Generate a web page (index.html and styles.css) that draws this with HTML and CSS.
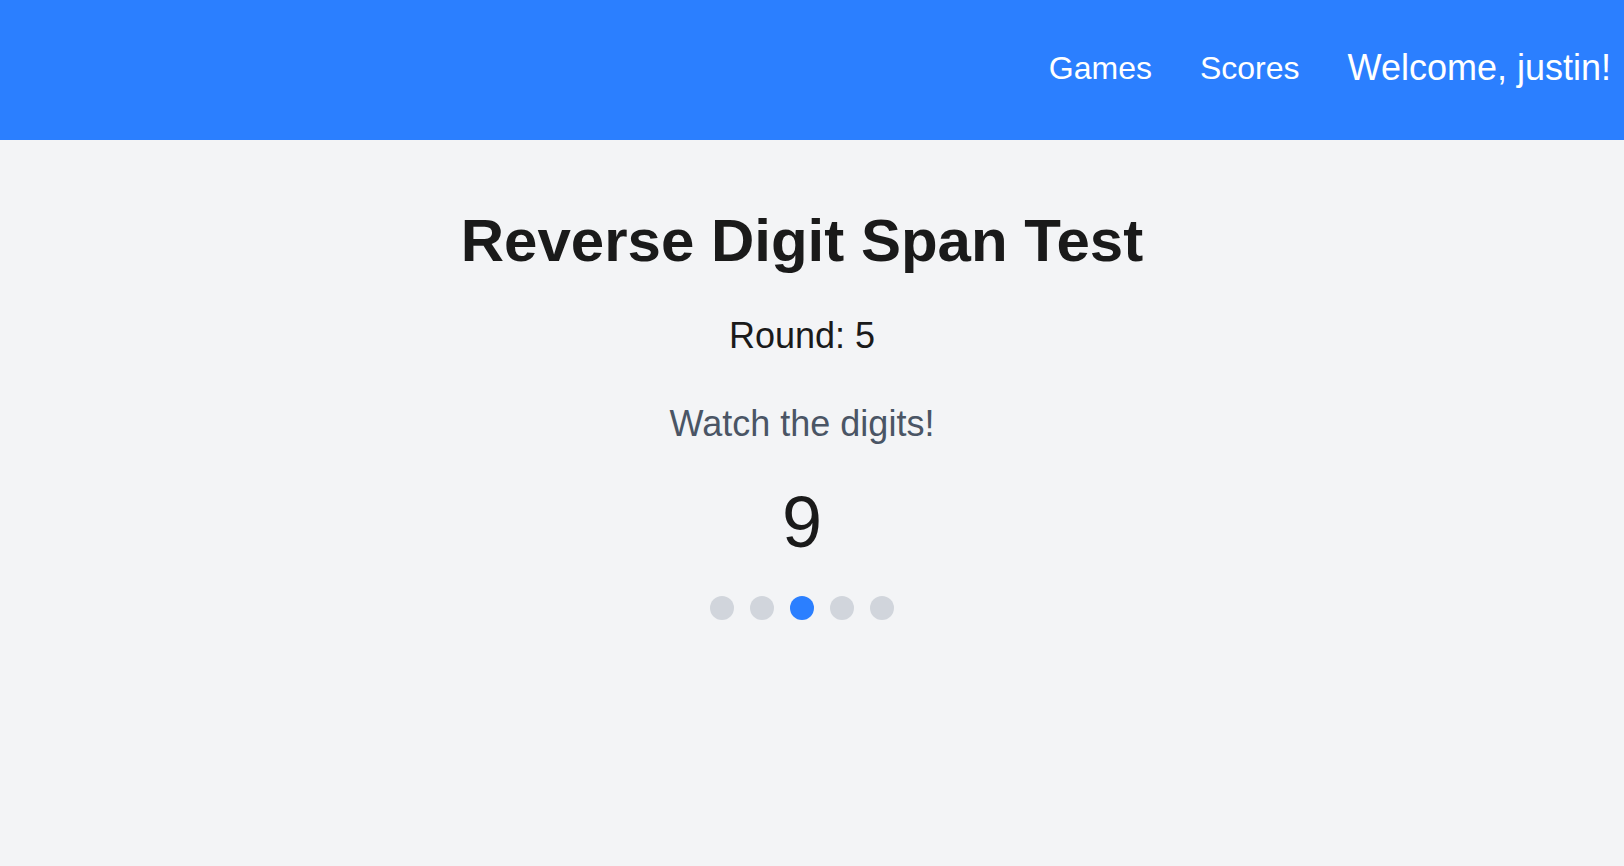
FILE: index.html
```html
<!DOCTYPE html>
<html lang="en">
<head>
<meta charset="utf-8">
<title>Reverse Digit Span Test</title>
<link rel="stylesheet" href="styles.css">
</head>
<body>
<header class="topbar">
  <nav class="nav">
    <a class="nav-link" href="#">Games</a>
    <a class="nav-link" href="#">Scores</a>
    <span class="welcome">Welcome, justin!</span>
  </nav>
</header>
<main class="game">
  <h1 class="title">Reverse Digit Span Test</h1>
  <p class="round">Round: 5</p>
  <p class="instruction">Watch the digits!</p>
  <div class="digit">9</div>
  <div class="dots">
    <span class="dot"></span>
    <span class="dot"></span>
    <span class="dot active"></span>
    <span class="dot"></span>
    <span class="dot"></span>
  </div>
</main>
</body>
</html>
```
FILE: styles.css
```css
html, body {
  margin: 0;
  padding: 0;
}
body {
  font-family: "Liberation Sans", Arial, sans-serif;
  background: #f3f4f6;
  color: #1a1a1a;
  min-height: 866px;
}
.topbar {
  height: 140px;
  background: #2b7fff;
  display: flex;
  justify-content: flex-end;
  align-items: center;
  padding: 0 13px 4px 16px;
  box-sizing: border-box;
}
.nav {
  display: flex;
  align-items: center;
  gap: 48px;
}
.nav-link {
  color: #ffffff;
  text-decoration: none;
  font-size: 32px;
}
.welcome {
  color: #ffffff;
  font-size: 36px;
}
.game {
  display: flex;
  flex-direction: column;
  align-items: center;
  text-align: center;
  padding: 66px 20px 0 0;
}
.title {
  margin: 0;
  font-size: 60px;
  font-weight: bold;
  color: #1a1a1a;
}
.round {
  margin: 40px 0 0;
  font-size: 36px;
  color: #1a1a1a;
}
.instruction {
  margin: 46px 0 0;
  font-size: 36px;
  color: #4a5565;
}
.digit {
  margin-top: 36px;
  font-size: 72px;
  color: #1a1a1a;
}
.dots {
  margin-top: 33px;
  display: flex;
  gap: 16px;
}
.dot {
  width: 24px;
  height: 24px;
  border-radius: 50%;
  background: #d1d5dc;
}
.dot.active {
  background: #2b7fff;
}
```
